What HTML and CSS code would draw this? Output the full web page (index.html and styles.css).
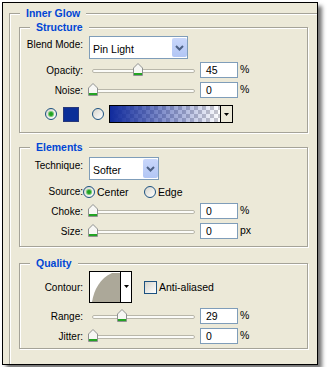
FILE: index.html
```html
<!DOCTYPE html>
<html lang="en">
<head>
    <meta charset="UTF-8">
    <title>Inner Glow</title>
    <link rel="stylesheet" href="styles.css">
</head>
<body>
    <div class="panel">
        <fieldset class="group outer">
            <legend>Inner Glow</legend>

            <fieldset class="group section structure">
                <legend>Structure</legend>
                <div class="row row-select">
                    <span class="label">Blend Mode:</span>
                    <div class="select select-blend">
                        <span class="select-text">Pin Light</span>
                        <span class="select-btn">
                            <svg width="9" height="6" viewBox="0 0 9 6"><path d="M1 1 L4.5 4.5 L8 1" fill="none" stroke="#4d6185" stroke-width="2"/></svg>
                        </span>
                    </div>
                </div>
                <div class="row row-slider">
                    <span class="label">Opacity:</span>
                    <div class="slider">
                        <div class="track"></div>
                        <svg class="thumb" style="left: 44px" width="10" height="13" viewBox="0 0 10 13"><path d="M0.5 12.5 V5 L5 0.5 L9.5 5 V12.5 Z" fill="#f7f7f4" stroke="#8f9190"/><rect x="1" y="10" width="8" height="2" fill="#23a323"/></svg>
                    </div>
                    <span class="field">45</span>
                    <span class="unit">%</span>
                </div>
                <div class="row row-slider row-next">
                    <span class="label">Noise:</span>
                    <div class="slider">
                        <div class="track"></div>
                        <svg class="thumb" style="left: -1px" width="10" height="13" viewBox="0 0 10 13"><path d="M0.5 12.5 V5 L5 0.5 L9.5 5 V12.5 Z" fill="#f7f7f4" stroke="#8f9190"/><rect x="1" y="10" width="8" height="2" fill="#23a323"/></svg>
                    </div>
                    <span class="field">0</span>
                    <span class="unit">%</span>
                </div>
                <div class="row row-color">
                    <span class="radio checked"></span>
                    <span class="swatch"></span>
                    <span class="radio radio-gradient"></span>
                    <div class="gradient-pick">
                        <div class="gradient"></div>
                        <div class="drop">
                            <svg width="5" height="3" viewBox="0 0 5 3"><path d="M0 0 H5 L2.5 3 Z" fill="#000"/></svg>
                        </div>
                    </div>
                </div>
            </fieldset>

            <fieldset class="group section elements">
                <legend>Elements</legend>
                <div class="row row-select">
                    <span class="label">Technique:</span>
                    <div class="select select-technique">
                        <span class="select-text">Softer</span>
                        <span class="select-btn">
                            <svg width="9" height="6" viewBox="0 0 9 6"><path d="M1 1 L4.5 4.5 L8 1" fill="none" stroke="#4d6185" stroke-width="2"/></svg>
                        </span>
                    </div>
                </div>
                <div class="row row-source">
                    <span class="label">Source:</span>
                    <span class="option">
                        <span class="radio checked"></span>
                        <span class="option-text">Center</span>
                    </span>
                    <span class="option">
                        <span class="radio"></span>
                        <span class="option-text">Edge</span>
                    </span>
                </div>
                <div class="row row-slider row-after-source">
                    <span class="label">Choke:</span>
                    <div class="slider">
                        <div class="track"></div>
                        <svg class="thumb" style="left: -1px" width="10" height="13" viewBox="0 0 10 13"><path d="M0.5 12.5 V5 L5 0.5 L9.5 5 V12.5 Z" fill="#f7f7f4" stroke="#8f9190"/><rect x="1" y="10" width="8" height="2" fill="#23a323"/></svg>
                    </div>
                    <span class="field">0</span>
                    <span class="unit">%</span>
                </div>
                <div class="row row-slider row-next">
                    <span class="label">Size:</span>
                    <div class="slider">
                        <div class="track"></div>
                        <svg class="thumb" style="left: -1px" width="10" height="13" viewBox="0 0 10 13"><path d="M0.5 12.5 V5 L5 0.5 L9.5 5 V12.5 Z" fill="#f7f7f4" stroke="#8f9190"/><rect x="1" y="10" width="8" height="2" fill="#23a323"/></svg>
                    </div>
                    <span class="field">0</span>
                    <span class="unit">px</span>
                </div>
            </fieldset>

            <fieldset class="group section quality">
                <legend>Quality</legend>
                <div class="row row-contour">
                    <span class="label">Contour:</span>
                    <div class="contour">
                        <svg class="contour-preview" width="30" height="30" viewBox="0 0 30 30"><path d="M2 30 C4 18 10 6 22 1 L30 1 L30 30 Z" fill="#aca899"/></svg>
                        <div class="drop">
                            <svg width="5" height="3" viewBox="0 0 5 3"><path d="M0 0 H5 L2.5 3 Z" fill="#000"/></svg>
                        </div>
                    </div>
                    <span class="checkbox"></span>
                    <span class="check-text">Anti-aliased</span>
                </div>
                <div class="row row-slider row-after-contour">
                    <span class="label">Range:</span>
                    <div class="slider">
                        <div class="track"></div>
                        <svg class="thumb" style="left: 28px" width="10" height="13" viewBox="0 0 10 13"><path d="M0.5 12.5 V5 L5 0.5 L9.5 5 V12.5 Z" fill="#f7f7f4" stroke="#8f9190"/><rect x="1" y="10" width="8" height="2" fill="#23a323"/></svg>
                    </div>
                    <span class="field">29</span>
                    <span class="unit">%</span>
                </div>
                <div class="row row-slider row-next">
                    <span class="label">Jitter:</span>
                    <div class="slider">
                        <div class="track"></div>
                        <svg class="thumb" style="left: -1px" width="10" height="13" viewBox="0 0 10 13"><path d="M0.5 12.5 V5 L5 0.5 L9.5 5 V12.5 Z" fill="#f7f7f4" stroke="#8f9190"/><rect x="1" y="10" width="8" height="2" fill="#23a323"/></svg>
                    </div>
                    <span class="field">0</span>
                    <span class="unit">%</span>
                </div>
            </fieldset>
        </fieldset>
    </div>
</body>
</html>
```

FILE: styles.css
```css
body {
    margin: 0;
    background: #fff;
    font-family: "Liberation Sans", Arial, sans-serif;
    font-size: 10px;
    color: #000;
}

.panel {
    margin: 2px;
    width: 314px;
    height: 361px;
    border: 1px solid #000;
    background: #ece9d8;
    box-shadow: 4px 4px 4px rgba(0, 0, 0, 0.55);
    overflow: hidden;
}

/* group boxes */
.group {
    margin: 0;
    padding: 0;
    min-width: 0;
    border: 1px solid #a5a398;
    box-shadow: 1px 1px 0 #fff, inset 1px 1px 0 #fff;
}

.group > legend {
    margin-left: 10px;
    padding: 0 6px;
    line-height: 13px;
    font-size: 10.5px;
    font-weight: bold;
    color: #0046d5;
    background: #ece9d8;
}

.outer {
    margin: 4px -30px 0 6px;
    padding: 0 0 40px 0;
}

.section {
    margin-left: 9px;
    width: 287px;
}

.structure {
    margin-top: 1px;
    padding-bottom: 9px;
}

.elements {
    margin-top: 8px;
    padding-bottom: 7px;
}

.quality {
    margin-top: 10px;
    padding-bottom: 4px;
}

/* rows */
.row {
    display: flex;
    align-items: center;
}

.label {
    width: 63px;
    flex-shrink: 0;
    text-align: right;
}

.row-select {
    align-items: flex-start;
    margin-top: 2px;
}

.row-select .label {
    padding-top: 3px;
}

.elements .row-select {
    margin-top: 3px;
}

.row-slider {
    height: 16px;
    margin-top: 3px;
}

.row-next {
    margin-top: 4px;
}

.row-after-source {
    margin-top: 5px;
}

.row-after-contour {
    margin-top: 5px;
}

/* dropdowns */
.select {
    display: flex;
    margin-left: 6px;
    height: 23px;
    box-sizing: border-box;
    border: 1px solid #7f9db9;
    background: #fff;
}

.select-blend {
    width: 99px;
}

.select-technique {
    width: 70px;
}

.select-text {
    flex: 1;
    padding: 6px 0 0 3px;
    font-size: 10.5px;
}

.select-btn {
    width: 15px;
    margin: 1px 0 1px 0;
    border-radius: 2px;
    background: linear-gradient(#c9d7fb, #b2c6f4);
    display: flex;
    align-items: center;
    justify-content: center;
}

/* sliders */
.slider {
    position: relative;
    display: flex;
    align-items: center;
    width: 111px;
    height: 16px;
    margin-left: 6px;
}

.track {
    width: 101px;
    height: 2px;
    margin: 2px 0 0 3px;
    border: 1px solid #b9b7aa;
    border-radius: 2px;
    background: #fbfbf8;
    box-sizing: content-box;
}

.thumb {
    position: absolute;
    top: 1px;
}

.field {
    width: 38px;
    height: 16px;
    box-sizing: border-box;
    border: 1px solid #7f9db9;
    background: #fff;
    padding-left: 5px;
    line-height: 14px;
    font-size: 10.5px;
}

.unit {
    margin-left: 2px;
    margin-top: -2px;
    font-size: 10.5px;
}

/* radios and checkbox */
.radio {
    width: 12px;
    height: 12px;
    box-sizing: border-box;
    border: 1px solid #1c5180;
    border-radius: 50%;
    background: linear-gradient(135deg, #d6d4cb, #fff);
    display: flex;
    align-items: center;
    justify-content: center;
    flex-shrink: 0;
}

.radio.checked::after {
    content: "";
    width: 4px;
    height: 4px;
    border-radius: 50%;
    background: #21a121;
    box-shadow: 0 0 0 1px #73c873;
}

.row-color {
    height: 18px;
    margin-top: 7px;
    padding-left: 25px;
}

.swatch {
    width: 16px;
    height: 15px;
    margin-left: 6px;
    box-sizing: border-box;
    border: 1px solid #27387a;
    background: #0b2f98;
}

.radio-gradient {
    margin-left: 13px;
}

.gradient-pick {
    display: flex;
    width: 124px;
    height: 18px;
    margin-left: 5px;
    box-sizing: border-box;
    border: 1px solid #000;
}

.gradient {
    flex: 1;
    background:
        linear-gradient(to right, #102a9c, rgba(16, 42, 156, 0)),
        conic-gradient(#c9c9cf 25%, #fff 0 50%, #c9c9cf 0 75%, #fff 0) 0 0 / 8px 8px;
}

.drop {
    width: 11px;
    border-left: 1px solid #000;
    background: #ece9d8;
    display: flex;
    align-items: center;
    justify-content: center;
}

.row-source {
    height: 13px;
    margin-top: 5px;
}

.option {
    display: flex;
    align-items: center;
    width: 61px;
}

.row-source .option:first-of-type {
    margin-left: 5px;
}

.option-text {
    margin-left: 2px;
    font-size: 10.5px;
}

/* contour */
.row-contour {
    height: 32px;
    margin-top: 1px;
}

.contour {
    display: flex;
    width: 43px;
    height: 32px;
    margin-left: 6px;
    box-sizing: border-box;
    border: 1px solid #000;
    background: #fff;
}

.contour-preview {
    display: block;
}

.contour .drop {
    flex: 1;
    background: #fff;
    align-items: flex-start;
    padding-top: 13px;
}

.checkbox {
    width: 13px;
    height: 13px;
    margin-left: 12px;
    box-sizing: border-box;
    border: 1px solid #1c5180;
    background: linear-gradient(135deg, #d6d4cb, #fff);
}

.check-text {
    margin-left: 2px;
    font-size: 10.5px;
}
```
